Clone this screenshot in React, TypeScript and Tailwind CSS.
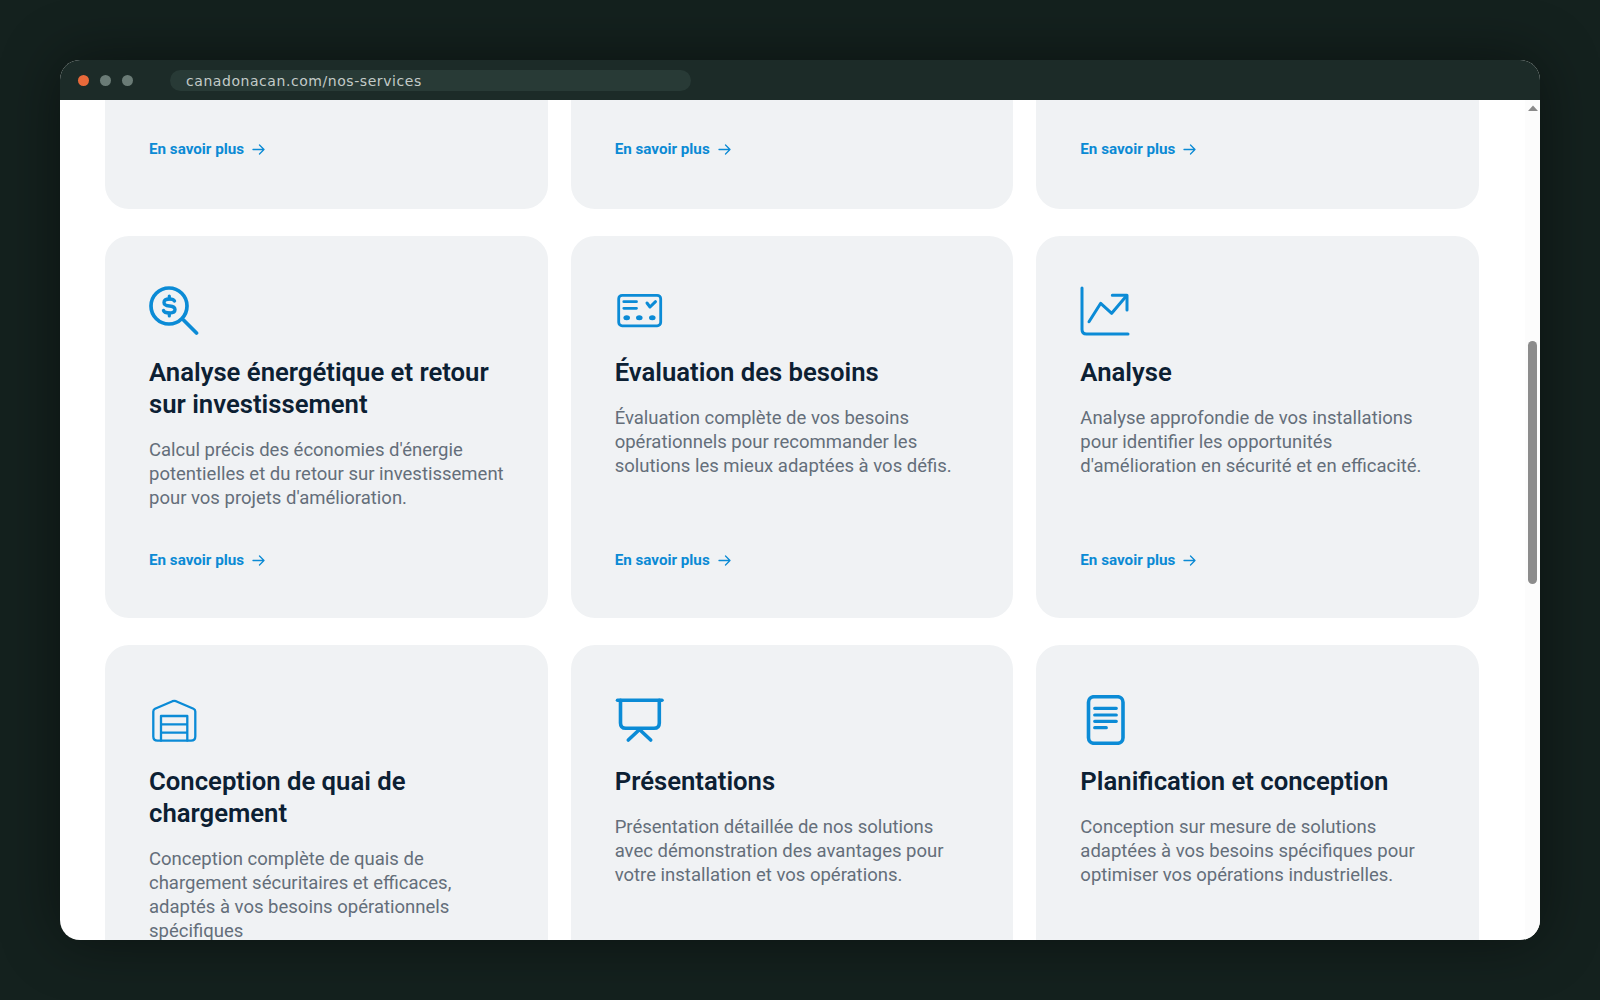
import React from "react";

const Blue = "#0b8bd6";

function Link() {
  return (
    <a className="mt-auto flex items-center gap-[8px] text-[15.2px] leading-[20px] font-bold text-[#0b8ad4] font-['Roboto',sans-serif]">
      En savoir plus
      <svg width="13" height="13" viewBox="0 0 13 13" fill="none" stroke="#0b8ad4" strokeWidth="1.3" strokeLinecap="round" strokeLinejoin="round">
        <path d="M1 6.5H12M7.5 2L12 6.5L7.5 11" />
      </svg>
    </a>
  );
}

const S = { fill: "none", stroke: Blue, strokeLinecap: "round" as const, strokeLinejoin: "round" as const };

function MoneySearch() {
  return (
    <svg width="50" height="50" viewBox="0 0 50 50" {...S} strokeWidth="3.7">
      <circle cx="20" cy="20" r="18" />
      <path d="M34.5 34L47.5 47" />
      <path d="M25.5 15Q24.5 13 20.5 13Q15 13 15 16.5Q15 19.5 20.5 20Q26 20.5 26 23.5Q26 27 20.5 27Q15.5 27 14.5 24.5" strokeWidth="3.4" />
      <path d="M20.3 10V13M20.3 27V30" strokeWidth="3.2" />
    </svg>
  );
}
function Panel() {
  return (
    <svg width="50" height="50" viewBox="0 0 50 50" {...S} strokeWidth="2.8">
      <rect x="3.7" y="9.3" width="42" height="30.5" rx="3.5" />
      <path d="M8.8 15.7H21.5M8.8 22.3H21.5" />
      <path d="M32 17L35 21L40.5 15.7" strokeWidth="3" />
      <g fill={Blue} stroke="none">
        <ellipse cx="11.7" cy="31.7" rx="3.3" ry="2.5" />
        <ellipse cx="24.3" cy="31.7" rx="3.3" ry="2.5" />
        <ellipse cx="37.3" cy="31.7" rx="3.3" ry="2.5" />
      </g>
    </svg>
  );
}
function Chart() {
  return (
    <svg width="50" height="50" viewBox="0 0 50 50" {...S} strokeWidth="3">
      <path d="M2 2V43.5Q2 48 6.5 48H48" />
      <path d="M9 35.7L20.7 17.3L31.7 27.3L45.7 10.7" />
      <path d="M32.3 9.3H47V24" />
    </svg>
  );
}
function Garage() {
  return (
    <svg width="50" height="50" viewBox="0 0 50 50" {...S} strokeWidth="2.3">
      <path d="M4.3 41.5V16.5Q4.3 14.5 6 13.7L23.5 6.2Q25.3 5.6 27 6.2L44.5 13.7Q46.3 14.5 46.3 16.5V41.5Q46.3 45.7 42 45.7H8.5Q4.3 45.7 4.3 41.5Z" />
      <path d="M12 45.7V21H38.3V45.7M12 29.3H38.3M12 37.7H38.3" />
    </svg>
  );
}
function Board() {
  return (
    <svg width="50" height="50" viewBox="0 0 50 50" {...S} strokeWidth="3.6">
      <path d="M2.5 5.3H47" />
      <path d="M5.5 5.3V28Q5.5 33.3 10.8 33.3H39Q44.3 33.3 44.3 28V5.3" />
      <path d="M13.3 45L24.5 34.5L35.7 45" />
    </svg>
  );
}
function Doc() {
  return (
    <svg width="50" height="50" viewBox="0 0 50 50" {...S} strokeWidth="3.6">
      <rect x="8.5" y="1.7" width="34.5" height="46.6" rx="5.5" />
      <path d="M14.7 13.3H36.3M14.7 20H36.3M14.7 26.3H36.3M14.7 32.7H26.3" strokeWidth="3.2" />
    </svg>
  );
}

const cards = [
  {
    icon: <MoneySearch />,
    title: "Analyse énergétique et retour sur investissement",
    text: "Calcul précis des économies d'énergie potentielles et du retour sur investissement pour vos projets d'amélioration.",
  },
  {
    icon: <Panel />,
    title: "Évaluation des besoins",
    text: "Évaluation complète de vos besoins opérationnels pour recommander les solutions les mieux adaptées à vos défis.",
  },
  {
    icon: <Chart />,
    title: "Analyse",
    text: "Analyse approfondie de vos installations pour identifier les opportunités d'amélioration en sécurité et en efficacité.",
  },
  {
    icon: <Garage />,
    title: "Conception de quai de chargement",
    text: "Conception complète de quais de chargement sécuritaires et efficaces, adaptés à vos besoins opérationnels spécifiques",
  },
  {
    icon: <Board />,
    title: "Présentations",
    text: "Présentation détaillée de nos solutions avec démonstration des avantages pour votre installation et vos opérations.",
  },
  {
    icon: <Doc />,
    title: "Planification et conception",
    text: "Conception sur mesure de solutions adaptées à vos besoins spécifiques pour optimiser vos opérations industrielles.",
  },
];

export default function App() {
  return (
    <div className="min-h-screen w-full bg-[#14211e] flex items-center justify-center font-['Roboto',sans-serif]">
      <div className="w-[1480px] h-[880px] rounded-[20px] overflow-hidden flex flex-col bg-white shadow-[0_0_60px_rgba(0,0,0,0.45)]">
        <div className="h-[40px] shrink-0 bg-[#1c2b28] flex items-center pl-[18px]">
          <div className="flex gap-[11px] items-center">
            <span className="w-[11px] h-[11px] rounded-full bg-[#e8693a]" />
            <span className="w-[11px] h-[11px] rounded-full bg-[#6a7b76]" />
            <span className="w-[11px] h-[11px] rounded-full bg-[#6a7b76]" />
          </div>
          <div className="ml-[37px] w-[521px] h-[21px] rounded-full bg-[#283a36] pl-[16px] pt-[2px] flex items-center text-[14px] tracking-[0.56px] text-[#c3cbc8] font-['DejaVu_Sans',sans-serif]">
            canadonacan.com/nos-services
          </div>
        </div>
        <div className="flex-1 flex min-h-0">
          <div className="flex-1 overflow-hidden pl-[45px] pr-[46px]">
            <div className="grid grid-cols-3 gap-x-[23px] gap-y-[27px]">
              {[0, 1, 2].map((i) => (
                <div key={i} className="h-[109px] rounded-b-[24px] bg-[#f0f2f4] px-[44px] pb-[50px] flex flex-col">
                  <Link />
                </div>
              ))}
              {cards.map((c) => (
                <div key={c.title} className="h-[382px] rounded-[24px] bg-[#f0f2f4] px-[44px] pt-[50px] pb-[48px] flex flex-col">
                  <div className="h-[50px] shrink-0">{c.icon}</div>
                  <h3 className="mt-[20px] text-[25.7px] leading-[32px] font-semibold text-[#0c2033]">{c.title}</h3>
                  <p className="mt-[17.5px] text-[18.5px] leading-[24px] text-[#646e7a]">{c.text}</p>
                  <Link />
                </div>
              ))}
            </div>
          </div>
          <div className="w-[15px] shrink-0 bg-[#fcfcfc] flex flex-col items-center">
            <svg width="12" height="7" viewBox="0 0 12 7" className="mt-[5px]"><path d="M6 0.5L11 6H1Z" fill="#8a8a8a" /></svg>
            <div className="mt-[229px] w-[9px] h-[243px] rounded-full bg-[#8c8c8c]" />
          </div>
        </div>
      </div>
    </div>
  );
}
